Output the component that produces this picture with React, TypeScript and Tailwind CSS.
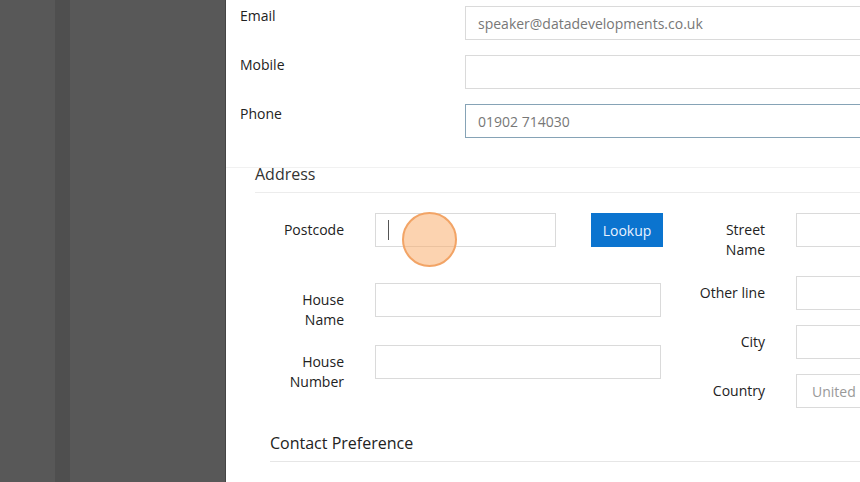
import React from 'react';

const font = { fontFamily: '"Open Sans", "Noto Sans", Arial, sans-serif' };

const TopRow: React.FC<{ label: string; value?: string; focused?: boolean }> = ({ label, value, focused }) => (
    <div className="flex h-[34px]">
        <div className="w-[239px] shrink-0 pl-[14px] text-[14px] leading-[20px] text-[#222]">{label}</div>
        <div
            className={`w-[420px] h-[34px] shrink-0 border bg-white pl-[12px] flex items-center text-[14px] text-[#777] ${
                focused ? 'border-[#86a3b6]' : 'border-[#dadada]'
            }`}
        >
            {value}
        </div>
    </div>
);

const Field: React.FC<{ label: React.ReactNode; width: string; labelWidth: string; className?: string; children?: React.ReactNode }> = ({
    label,
    width,
    labelWidth,
    className = '',
    children,
}) => (
    <div className={`flex items-start shrink-0 ${className}`}>
        <div className={`${labelWidth} pt-[7px] pr-[31px] text-right text-[14px] leading-[20px] text-[#222] shrink-0`}>{label}</div>
        <div className={`${width} h-[34px] border border-[#dadada] bg-white shrink-0 relative flex items-center overflow-hidden`}>{children}</div>
    </div>
);

const App: React.FC = () => {
    return (
        <div className="flex w-[860px] h-[482px] overflow-hidden bg-white" style={font}>
            <div className="w-[225px] h-full bg-[#585858] flex shrink-0">
                <div className="w-[55px] h-full"></div>
                <div className="w-[15px] h-full bg-[#4f4f4f]"></div>
            </div>
            <div className="w-px h-full bg-[#454545] shrink-0"></div>
            <div className="flex-1 relative overflow-hidden">
                <div className="pt-[6px] flex flex-col gap-[15px]">
                    <TopRow label="Email" value="speaker@datadevelopments.co.uk" />
                    <TopRow label="Mobile" />
                    <TopRow label="Phone" value="01902 714030" focused />
                </div>

                <div className="mt-[29px] h-px bg-[#f1f1f1]"></div>

                <div className="ml-[29px]">
                    <div className="-mt-[5px] pb-[7px] border-b border-[#ececec] text-[16px] leading-[22px] text-[#333]">Address</div>

                    <div className="flex mt-[20px]">
                        <div className="w-[425px] shrink-0 flex flex-col">
                            <div className="flex items-start">
                                <Field label="Postcode" labelWidth="w-[120px]" width="w-[181px]">
                                    <div className="ml-[12px] w-px h-[20px] bg-[#555]"></div>
                                </Field>
                                <button className="ml-[35px] w-[72px] h-[34px] shrink-0 bg-[#0b74cf] text-[#eaf2ff] text-[14px]">Lookup</button>
                            </div>
                            <Field className="mt-[36px]" label={<>House<br />Name</>} labelWidth="w-[120px]" width="w-[286px]" />
                            <Field className="mt-[15px]" label={<>House<br />Number</>} labelWidth="w-[120px]" width="w-[286px]" />
                        </div>
                        <div className="flex flex-col shrink-0">
                            <Field label={<>Street<br />Name</>} labelWidth="w-[116px]" width="w-[120px]" />
                            <Field className="mt-[16px]" label="Other line" labelWidth="w-[116px]" width="w-[120px]" />
                            <Field className="mt-[15px]" label="City" labelWidth="w-[116px]" width="w-[120px]" />
                            <Field className="mt-[15px]" label="Country" labelWidth="w-[116px]" width="w-[120px]">
                                <span className="pl-[15px] text-[14px] text-[#999] whitespace-nowrap">United Kingdom</span>
                            </Field>
                        </div>
                    </div>
                </div>

                <div className="ml-[44px] mt-[24px] pb-[7px] border-b border-[#e6e6e6] text-[16px] leading-[22px] text-[#222]">
                    Contact Preference
                </div>

                {/* click indicator */}
                <div className="absolute left-[176px] top-[212px] w-[55px] h-[55px] rounded-full border-2 border-[#f2a466] bg-[#f9ae70]/55"></div>
            </div>
        </div>
    );
};

export default App;
